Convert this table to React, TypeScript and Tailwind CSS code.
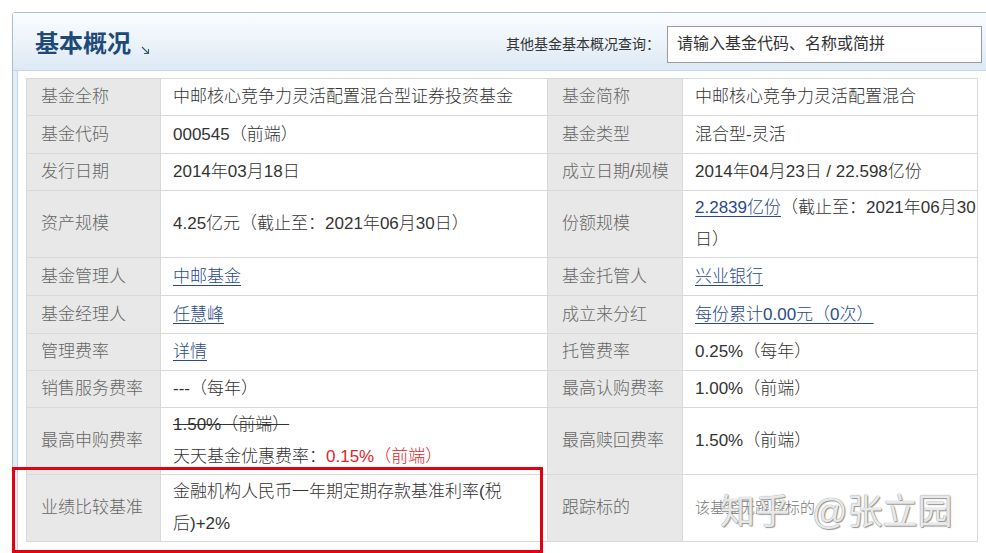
import React from "react"

const FONT = { fontFamily: '"Liberation Sans", "Noto Sans CJK SC", sans-serif' }

type Cell = { label: string; value: React.ReactNode }
type Row = { h: string; cells: [Cell, Cell] }

const link = "text-[#2a4a8a] underline underline-offset-[3px] decoration-[#2a4a8a]"

const rows: Row[] = [
    {
        h: "h-[37px]",
        cells: [
            { label: "基金全称", value: "中邮核心竞争力灵活配置混合型证券投资基金" },
            { label: "基金简称", value: "中邮核心竞争力灵活配置混合" },
        ],
    },
    {
        h: "h-[38px]",
        cells: [
            { label: "基金代码", value: "000545（前端）" },
            { label: "基金类型", value: "混合型-灵活" },
        ],
    },
    {
        h: "h-[37px]",
        cells: [
            { label: "发行日期", value: "2014年03月18日" },
            { label: "成立日期/规模", value: "2014年04月23日 / 22.598亿份" },
        ],
    },
    {
        h: "h-[67px]",
        cells: [
            { label: "资产规模", value: "4.25亿元（截止至：2021年06月30日）" },
            {
                label: "份额规模",
                value: (
                    <>
                        <span className="whitespace-nowrap">
                            <a className={link}>2.2839亿份</a>（截止至：2021年06月30
                        </span>
                        <br />
                        日）
                    </>
                ),
            },
        ],
    },
    {
        h: "h-[38px]",
        cells: [
            { label: "基金管理人", value: <a className={link}>中邮基金</a> },
            { label: "基金托管人", value: <a className={link}>兴业银行</a> },
        ],
    },
    {
        h: "h-[38px]",
        cells: [
            { label: "基金经理人", value: <a className={link}>任慧峰</a> },
            { label: "成立来分红", value: <a className={link}>每份累计0.00元（0次）</a> },
        ],
    },
    {
        h: "h-[37px]",
        cells: [
            { label: "管理费率", value: <a className={link}>详情</a> },
            { label: "托管费率", value: "0.25%（每年）" },
        ],
    },
    {
        h: "h-[37px]",
        cells: [
            { label: "销售服务费率", value: "---（每年）" },
            { label: "最高认购费率", value: "1.00%（前端）" },
        ],
    },
    {
        h: "h-[67px]",
        cells: [
            {
                label: "最高申购费率",
                value: (
                    <>
                        <span className="line-through decoration-[#333]">1.50%（前端）</span>
                        <br />
                        天天基金优惠费率：<span className="text-[#e0262b]">0.15%（前端）</span>
                    </>
                ),
            },
            { label: "最高赎回费率", value: "1.50%（前端）" },
        ],
    },
    {
        h: "h-[67px]",
        cells: [
            {
                label: "业绩比较基准",
                value: (
                    <>
                        <span className="whitespace-nowrap">金融机构人民币一年期定期存款基准利率(税</span>
                        <br />
                        后)+2%
                    </>
                ),
            },
            {
                label: "跟踪标的",
                value: <span className="text-[15px] text-[#777]">该基金无跟踪标的</span>,
            },
        ],
    },
]

export default function App() {
    return (
        <div className="relative w-[986px] h-[553px] overflow-hidden bg-white" style={FONT}>
            {/* panel */}
            <div className="ml-[12px] mt-[12px] w-[990px] border border-[#a9bfd4] rounded-tl-[3px]">
                {/* header */}
                <div className="h-[58px] border-b border-[#c3d5e6] bg-gradient-to-b from-[#fbfdff] to-[#dde9f5] flex items-center justify-between pl-[22px] pr-[19px] pt-[5px]">
                    <div className="flex items-end gap-[10px]">
                        <h2 className="text-[24px] font-bold text-[#1d4a78] leading-none">基本概况</h2>
                        <svg width="9" height="9" viewBox="0 0 9 9" className="mb-[1px]">
                            <path d="M1 1 L7.5 7.5 M7.5 3 L7.5 7.5 L3 7.5" stroke="#35567a" strokeWidth="1.1" fill="none" />
                        </svg>
                    </div>
                    <div className="flex items-center gap-[7px]">
                        <span className="text-[14px] text-[#333]">其他基金基本概况查询：</span>
                        <div className="w-[315px] h-[37px] border border-[#9a9a9a] bg-white flex items-center pl-[9px] text-[16px] text-[#333]">
                            请输入基金代码、名称或简拼
                        </div>
                    </div>
                </div>
                {/* body */}
                <div className="bg-[#e3edf7] pl-[4px]">
                    <div className="bg-white border-l border-[#c3d5e6] pl-[8px] pt-[7px] pb-[20px]">
                        <table className="table-fixed border-collapse w-[951px] text-[17px] font-light text-[#333]">
                            <colgroup>
                                <col className="w-[134px]" />
                                <col className="w-[387px]" />
                                <col className="w-[135px]" />
                                <col className="w-[295px]" />
                            </colgroup>
                            <tbody>
                                {rows.map((r, i) => (
                                    <tr key={i} className={r.h}>
                                        {r.cells.map((c, j) => (
                                            <React.Fragment key={j}>
                                                <td className="border border-[#d9d9d9] bg-[#e8e8e8] text-[#666] pl-[14px] py-0 leading-[32px] align-middle whitespace-nowrap">
                                                    {c.label}
                                                </td>
                                                <td className="border border-[#d9d9d9] bg-white pl-[12px] pr-[2px] py-0 leading-[32px] align-middle">
                                                    {c.value}
                                                </td>
                                            </React.Fragment>
                                        ))}
                                    </tr>
                                ))}
                            </tbody>
                        </table>
                    </div>
                </div>
            </div>

            {/* watermark */}
            <div
                className="absolute left-[720px] top-[494px] flex gap-[22px] text-[35px] leading-none text-white/85 whitespace-nowrap"
                style={{ textShadow: "0 0 1px #666, 1px 1px 1px #999" }}
            >
                <span>知乎</span>
                <span>@张立园</span>
            </div>

            {/* annotation box */}
            <div className="absolute left-[12px] top-[467px] w-[531px] h-[86px] border-[3px] border-[#e5000f]" />
        </div>
    )
}
